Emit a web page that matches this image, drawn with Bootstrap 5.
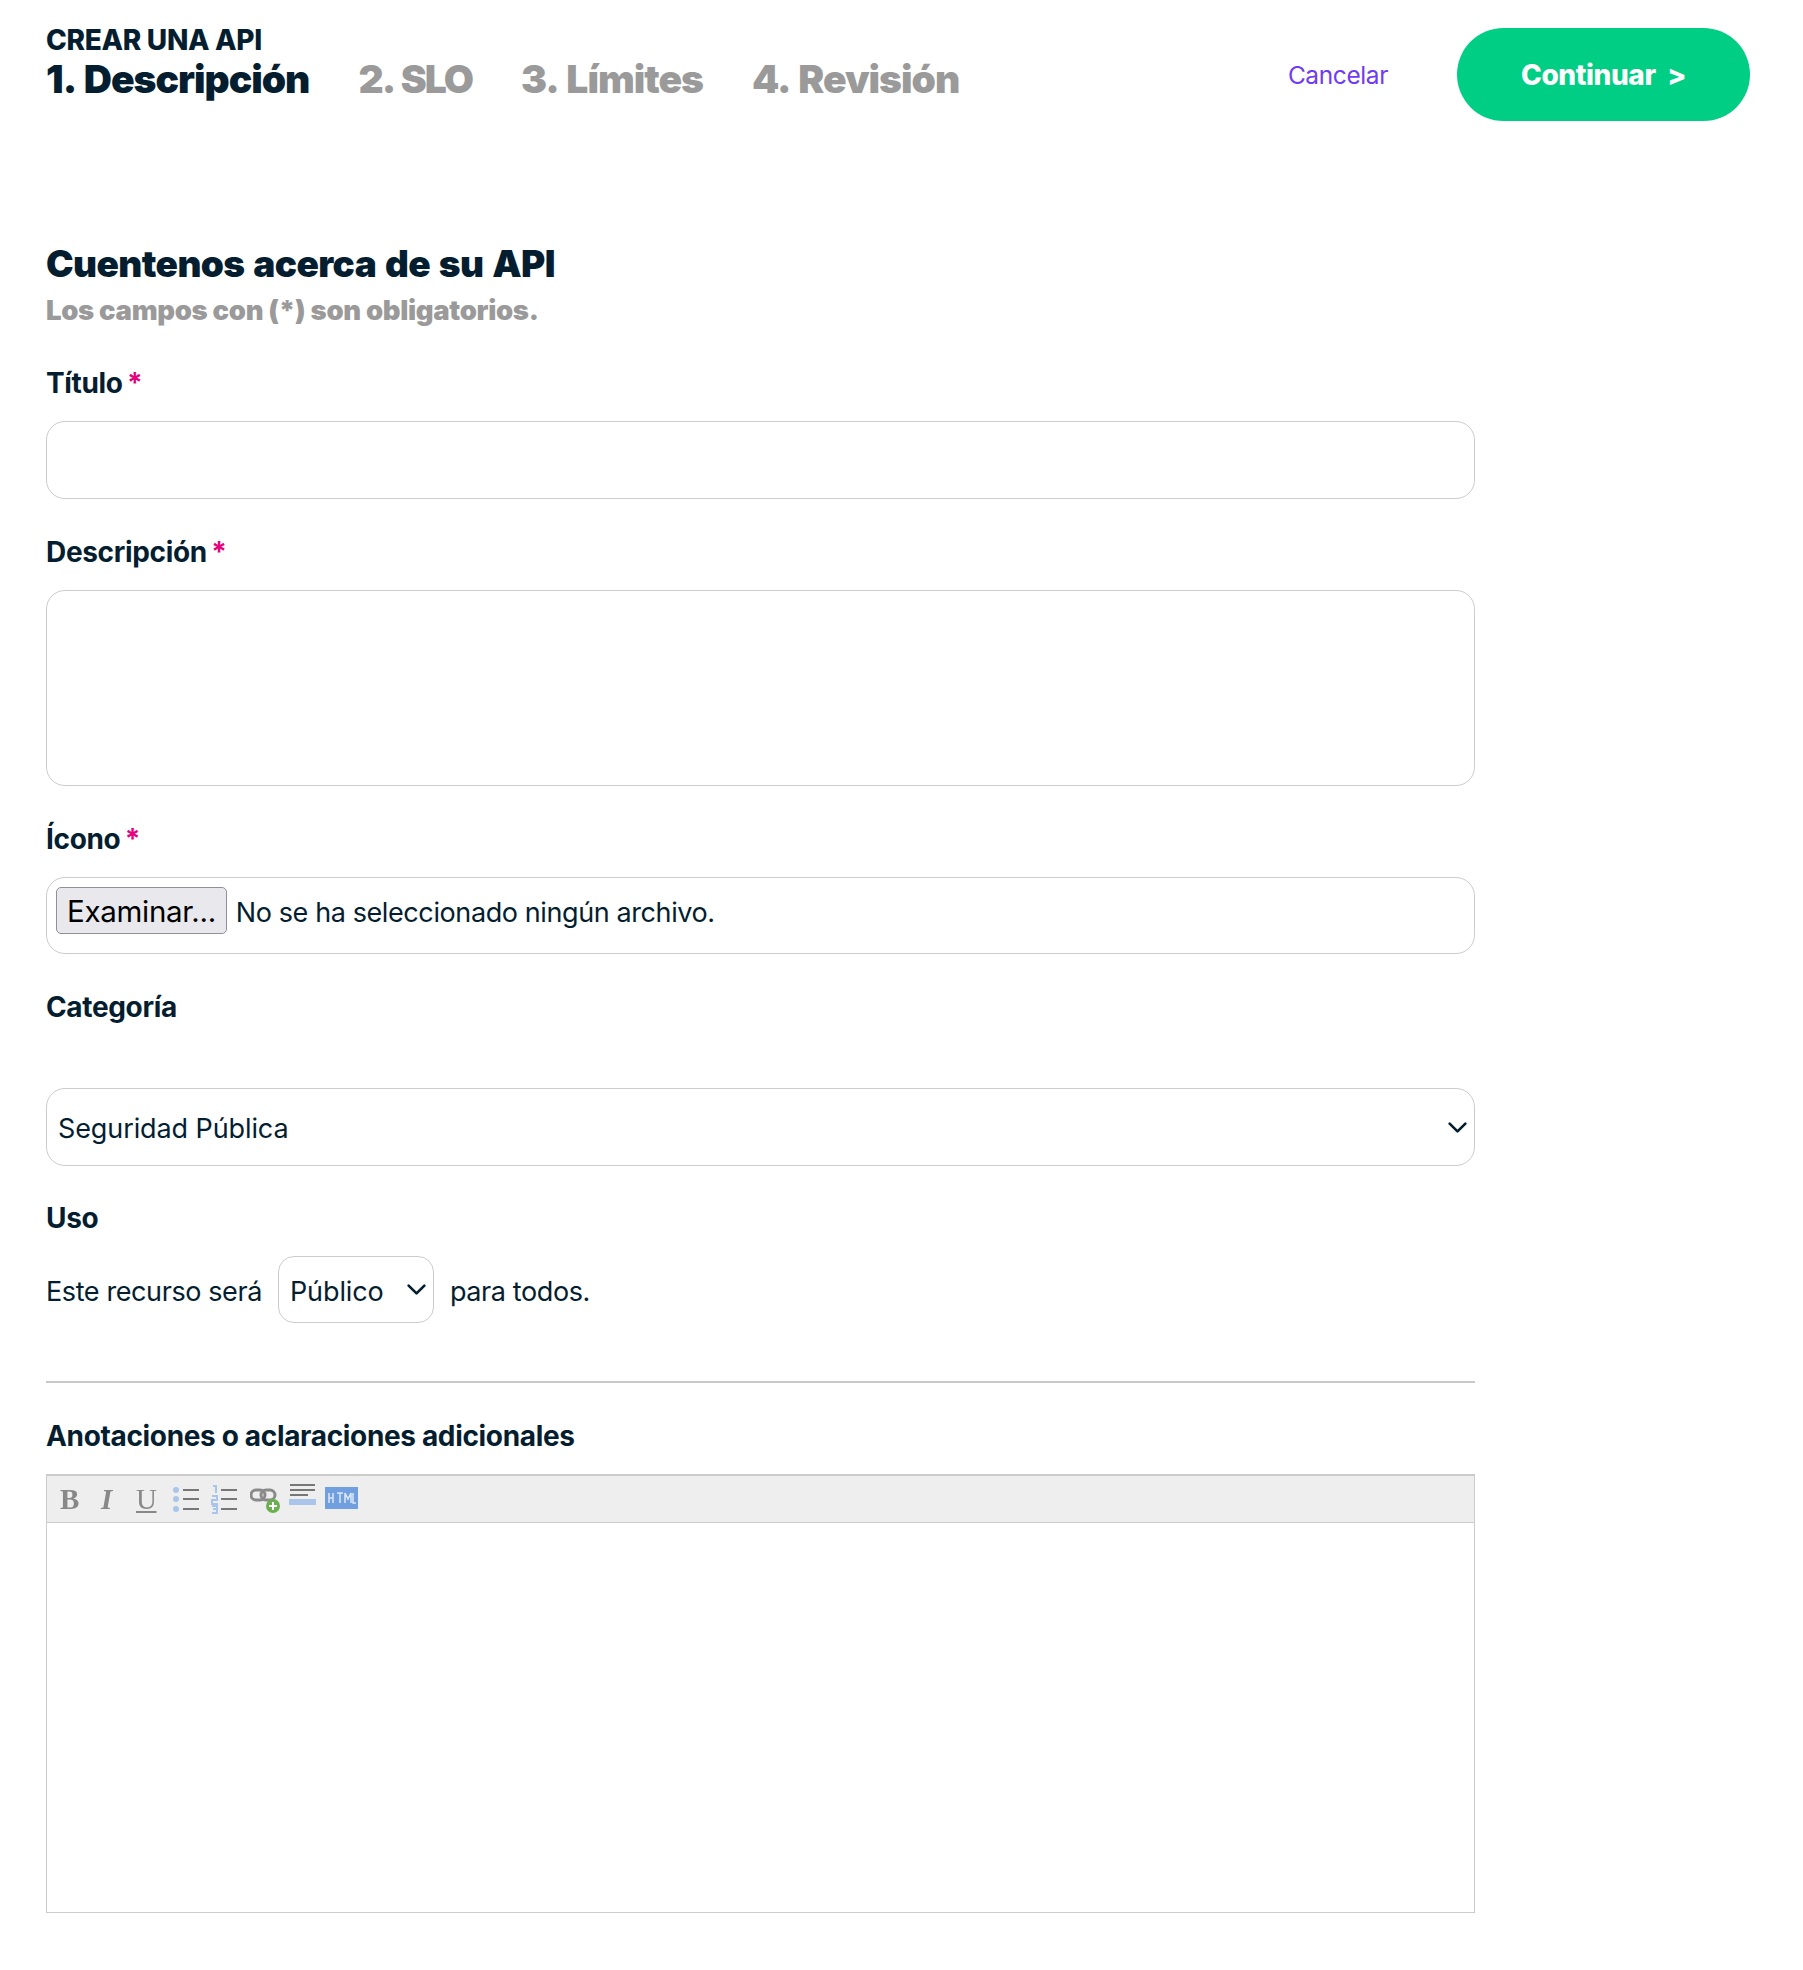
<!DOCTYPE html>
<html lang="es">
<head>
    <meta charset="UTF-8">
    <meta name="viewport" content="width=device-width, initial-scale=1.0">
    <title>Crear una API</title>
    <link href="https://cdn.jsdelivr.net/npm/bootstrap@5.3.0/dist/css/bootstrap.min.css" rel="stylesheet">
    <style>
        body { font-family: "Inter", "Liberation Sans", sans-serif; color: #041e30; background: #fff; font-size: 27px; letter-spacing: -0.4px; }
        .page-wrap { padding: 0 53px 57px 46px; }
        .top-bar { height: 150px; padding-top: 28px; }
        .kicker { font-size: 28px; font-weight: 800; line-height: 1; letter-spacing: -0.3px; margin-top: -2px; }
        .steps { gap: 49px; margin-top: 2px; }
        .step-item { font-size: 39px; font-weight: 900; line-height: 46px; color: #9a9a9a; letter-spacing: -1px; word-spacing: 3px; }
        .step-item.is-active { color: #041e30; }
        .step-item.step-tight { letter-spacing: -2px; }
        .cancel-link { color: #6f3bf5; font-size: 24.5px; text-decoration: none; margin-right: 69px; margin-top: 2px; }
        .btn-go { background: #00ce84; color: #fff; border: 0; border-radius: 47px; width: 293px; height: 93px; font-size: 28px; font-weight: 800; letter-spacing: -0.4px; }
        .btn-go:hover { background: #00ce84; color: #fff; }
        .form-area { width: 1429px; padding-top: 91px; }
        .main-title { font-size: 37px; font-weight: 900; line-height: 45px; margin: 0; letter-spacing: -0.6px; word-spacing: 2px; }
        .sub-note { font-size: 27.5px; font-weight: 900; color: #9a9a9a; line-height: 32px; margin: 8px 0 41px; letter-spacing: -0.33px; }
        .field-label { display: block; font-size: 28px; font-weight: 700; line-height: 34px; margin: -1px 0 21px; letter-spacing: -0.34px; }
        .req { color: #e6007e; margin-left: -2px; }
        .field-box { border: 1px solid #ccc; border-radius: 19px; height: 78px; color: #041e30; font-size: 27px; padding: 0 12px; letter-spacing: -0.4px; margin-bottom: 37px; }
        textarea.field-box { height: 196px; resize: none; }
        .file-box { display: flex; align-items: flex-start; gap: 9px; padding: 9px; height: 77px; }
        .file-btn { background: #e9e9ed; border: 1px solid #8f8f9d; border-radius: 5px; font-size: 29.5px; color: #000; line-height: 46px; height: 47px; padding: 0 10px; letter-spacing: -0.3px; }
        .file-name { line-height: 51px; }
        select.field-box {
            padding-top: 5px;
            padding-left: 11px;
            letter-spacing: -0.1px;
            background-image: url("data:image/svg+xml,%3csvg xmlns='http://www.w3.org/2000/svg' viewBox='0 0 16 16'%3e%3cpath fill='none' stroke='%23041e30' stroke-linecap='round' stroke-linejoin='round' stroke-width='2' d='m2 5 6 6 6-6'/%3e%3c/svg%3e");
            background-size: 21px 21px;
            background-position: right 6px center;
        }
        .sel-gap { margin-top: 64px; margin-bottom: 36px; }
        .use-row { gap: 16px; }
        .use-text { padding-top: 6px; }
        .sel-small { width: 156px; height: 67px; margin: 0; border-radius: 16px; }
        .use-block { margin-bottom: 58px; }
        .use-block .field-label { margin-bottom: 21px; }
        .rule-line { border: 0; border-top: 2px solid #c9c9c9; opacity: 1; margin: 0 0 37px; }
        .field-label.note-label { margin-bottom: 21px; }
        .editor-box { border: 1px solid #ccc; }
        .editor-tools { background: #eee; height: 48px; border-top: 1px solid #ccc; border-bottom: 1px solid #ccc; padding-left: 13px; color: #888; }
        .tool-glyph { font-family: "Liberation Serif", serif; font-size: 29px; line-height: 1; width: 38px; filter: blur(0.5px); }
        .tool-shift { padding-left: 3px; }
        .tool-narrow { width: 36px; }
        .tool-icon { filter: blur(0.4px); flex: none; }
        .editor-body { height: 389px; }
    </style>
</head>
<body>
    <div class="page-wrap">
        <div class="top-bar d-flex justify-content-between align-items-start">
            <div>
                <div class="kicker">CREAR UNA API</div>
                <div class="steps d-flex">
                    <div class="step-item is-active">1. Descripción</div>
                    <div class="step-item step-tight">2. SLO</div>
                    <div class="step-item">3. Límites</div>
                    <div class="step-item">4. Revisión</div>
                </div>
            </div>
            <div class="d-flex align-items-center">
                <a href="#" class="cancel-link">Cancelar</a>
                <button type="button" class="btn btn-go">Continuar &nbsp;&gt;</button>
            </div>
        </div>

        <form class="form-area">
            <h1 class="main-title">Cuentenos acerca de su API</h1>
            <p class="sub-note">Los campos con (*) son obligatorios.</p>

            <label class="field-label" for="titulo">Título <span class="req">*</span></label>
            <input type="text" class="form-control field-box" id="titulo">

            <label class="field-label" for="descripcion">Descripción <span class="req">*</span></label>
            <textarea class="form-control field-box" id="descripcion"></textarea>

            <label class="field-label">Ícono <span class="req">*</span></label>
            <div class="field-box file-box">
                <span class="file-btn">Examinar...</span>
                <span class="file-name">No se ha seleccionado ningún archivo.</span>
            </div>

            <label class="field-label" for="categoria">Categoría</label>
            <select class="form-select field-box sel-gap" id="categoria">
                <option>Seguridad Pública</option>
            </select>

            <div class="use-block">
                <label class="field-label" for="uso">Uso</label>
                <div class="use-row d-flex align-items-center">
                    <span class="use-text">Este recurso será</span>
                    <select class="form-select field-box sel-small" id="uso">
                        <option>Público</option>
                    </select>
                    <span class="use-text">para todos.</span>
                </div>
            </div>
            <hr class="rule-line">

            <label class="field-label note-label">Anotaciones o aclaraciones adicionales</label>
            <div class="editor-box">
                <div class="editor-tools d-flex align-items-center">
                    <span class="tool-glyph fw-bold">B</span>
                    <span class="tool-glyph tool-shift fw-bold fst-italic">I</span>
                    <span class="tool-glyph tool-narrow text-decoration-underline">U</span>
                    <svg class="tool-icon" width="38" height="30" viewBox="0 0 38 30"><g fill="#a9c6ea"><circle cx="4" cy="6" r="3"/><circle cx="4" cy="15" r="3"/><circle cx="4" cy="25" r="3"/></g><g stroke="#777" stroke-width="2"><path d="M11 6h16M11 15h16M11 25h16"/></g></svg>
                    <svg class="tool-icon" width="40" height="30" viewBox="0 0 40 30"><g stroke="#a9c6ea" stroke-width="2" fill="none"><path d="M3 2h3v7M2 12h5v4H2v4h6M2 22h5v7H2M3 25h4"/></g><g stroke="#777" stroke-width="2"><path d="M11 6h16M11 15h16M11 25h16"/></g></svg>
                    <svg class="tool-icon" width="39" height="30" viewBox="0 0 39 30"><g fill="none" stroke="#8a8a8a" stroke-width="3"><rect x="1" y="6" width="14" height="10" rx="5"/><rect x="11" y="6" width="14" height="10" rx="5"/></g><circle cx="23" cy="22" r="7" fill="#6ab04c"/><path d="M23 18v8M19 22h8" stroke="#fff" stroke-width="2"/></svg>
                    <svg class="tool-icon" width="36" height="30" viewBox="0 0 36 30"><path d="M1 1h25M1 6h25M1 11h18" stroke="#777" stroke-width="2"/><rect x="0" y="15" width="27" height="6" fill="#a9c6ea"/></svg>
                    <svg class="tool-icon" width="34" height="30" viewBox="0 0 34 30"><rect x="0" y="3" width="33" height="22" fill="#6f9fde"/><path d="M4 9v10M8 9v10M4 14h4M12 9h6M15 9v10M20 19V9l3 6 3-6v10M28 9v10h3" stroke="#dce8f8" stroke-width="1.5" fill="none"/></svg>
                </div>
                <div class="editor-body"></div>
            </div>
        </form>
    </div>
</body>
</html>
